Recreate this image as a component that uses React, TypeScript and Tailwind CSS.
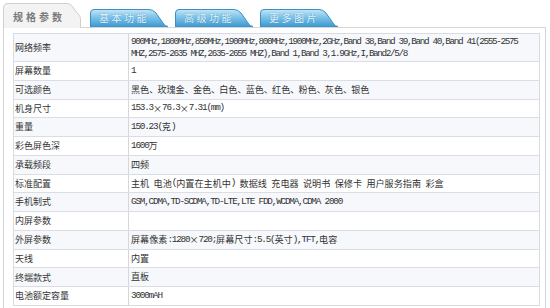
import React from "react";

const CJK = /([\u3000-\u303f\u3400-\u9fff\uff00-\uffef×、]+)/;

function CjkRun({ text }: { text: string }) {
  const bits = text.split(/(、)/).filter((b) => b.length > 0);
  return (
    <span className="font-['Noto_Sans_CJK_SC',sans-serif] tracking-[0px] text-[9.1px]">
      {bits.map((b, j) =>
        b === "、" ? (
          <span key={j} className="inline-block w-[8.2px]">
            、
          </span>
        ) : (
          <React.Fragment key={j}>{b}</React.Fragment>
        )
      )}
    </span>
  );
}

function Mixed({ text, tight }: { text: string; tight?: boolean }) {
  const parts = text.split(CJK).filter((p) => p.length > 0);
  return (
    <>
      {parts.map((p, i) =>
        CJK.test(p) ? (
          <CjkRun key={i} text={p} />
        ) : (
          <span
            key={i}
            className={`font-['Liberation_Mono',monospace] whitespace-pre ${tight ? "tracking-[-1.35px]" : "tracking-[-1.2px]"}`}
          >
            {p}
          </span>
        )
      )}
    </>
  );
}

const rows: [string, string][] = [
  ["屏幕数量", "1"],
  ["可选颜色", "黑色、玫瑰金、金色、白色、蓝色、红色、粉色、灰色、银色"],
  ["机身尺寸", "153.3×76.3×7.31(mm)"],
  ["重量", "150.23(克)"],
  ["彩色屏色深", "1600万"],
  ["承载频段", "四频"],
  ["标准配置", "主机 电池(内置在主机中) 数据线 充电器 说明书 保修卡 用户服务指南 彩盒"],
  ["手机制式", "GSM,CDMA,TD-SCDMA,TD-LTE,LTE FDD,WCDMA,CDMA 2000"],
  ["内屏参数", ""],
  ["外屏参数", "屏幕像素:1280×720;屏幕尺寸:5.5(英寸),TFT,电容"],
  ["天线", "内置"],
  ["终端款式", "直板"],
  ["电池额定容量", "3000mAH"],
];

function BlueTab({ label, id }: { label: string; id: string }) {
  return (
    <div className="relative w-[78px] h-[18px] mb-px flex items-center justify-center">
      <svg className="absolute inset-0" width="78" height="18" viewBox="0 0 78 18">
        <defs>
          <linearGradient id={id} x1="0" y1="0" x2="0" y2="1">
            <stop offset="0" stopColor="#c4e6f6" />
            <stop offset="0.45" stopColor="#7cc3e8" />
            <stop offset="1" stopColor="#3b98cf" />
          </linearGradient>
        </defs>
        <path
          d="M0.5,18 L0.5,4 Q0.5,0.5 4,0.5 L59,0.5 Q63,0.5 66,4 L73,14 Q75,17.5 78,17.5 L78,18 Z"
          fill={`url(#${id})`}
          stroke="#3a8fc4"
          strokeWidth="1"
        />
      </svg>
      <span className="relative pr-[10px] text-[10px] leading-none tracking-[2.5px] text-[#eaf6fd] font-['Noto_Sans_CJK_SC',sans-serif] [text-shadow:0_0_1px_#2b7fb3]">
        {label}
      </span>
    </div>
  );
}

export default function App() {
  return (
    <div className="w-[550px] h-[308px] bg-white overflow-hidden text-[#333]">
      <div className="flex items-end h-[28px] pl-[3px]">
        <div className="relative z-10 w-[78px] h-[25px] flex items-center justify-center">
          <svg className="absolute inset-0" width="78" height="25" viewBox="0 0 78 25">
            <path
              d="M0.5,25 L0.5,5 Q0.5,0.5 5,0.5 L64,0.5 Q67,0.5 69,3 L75,11 Q77.5,13 77.5,16 L77.5,25"
              fill="#f3f3f3"
              stroke="#d0d0d0"
              strokeWidth="1"
            />
          </svg>
          <span className="relative pt-[3px] pr-[6px] text-[10px] leading-none font-bold tracking-[3px] text-[#7a7a7a] font-['Noto_Sans_CJK_SC',sans-serif]">
            规格参数
          </span>
        </div>
        <div className="ml-[9px] flex gap-[7px]">
          <BlueTab label="基本功能" id="g1" />
          <BlueTab label="高级功能" id="g2" />
          <BlueTab label="更多图片" id="g3" />
        </div>
      </div>
      <div className="-mt-px ml-[3px] w-[543px] h-[290px] border border-b-0 border-[#d6d6d6] pt-[5px] pl-[9px]">
        <div className="w-[527px] border border-[#d8dce2] text-[9.33px]">
          <div className="flex h-[27px] bg-[#f6f8fc]">
            <div className="w-[115px] shrink-0 border-r border-[#d4d8de] flex items-center pl-[1px] text-[9px] font-['Noto_Sans_CJK_SC',sans-serif]">
              网络频率
            </div>
            <div className="flex-1 min-w-0 pl-[2px] pt-[2px] leading-[10.5px] whitespace-nowrap">
              <div>
                <Mixed tight text="900MHz,1800MHz,850MHz,1900MHz,800MHz,1900MHz,2GHz,Band 38,Band 39,Band 40,Band 41(2555-2575" />
              </div>
              <div>
                <Mixed tight text="MHZ,2575-2635 MHZ,2635-2655 MHZ),Band 1,Band 3,1.9GHz,I,Band2/5/8" />
              </div>
            </div>
          </div>
          {rows.map(([k, v], i) => (
            <div
              key={k}
              className={`flex h-[18.77px] border-t border-[#dadee4] ${i % 2 === 0 ? "bg-white" : "bg-[#f6f8fc]"}`}
            >
              <div className="w-[115px] shrink-0 border-r border-[#d4d8de] flex items-center pl-[1px] text-[9px] font-['Noto_Sans_CJK_SC',sans-serif]">
                {k}
              </div>
              <div className="flex-1 flex items-center pl-[2px] whitespace-nowrap overflow-hidden">
                <Mixed text={v} />
              </div>
            </div>
          ))}
        </div>
      </div>
    </div>
  );
}
